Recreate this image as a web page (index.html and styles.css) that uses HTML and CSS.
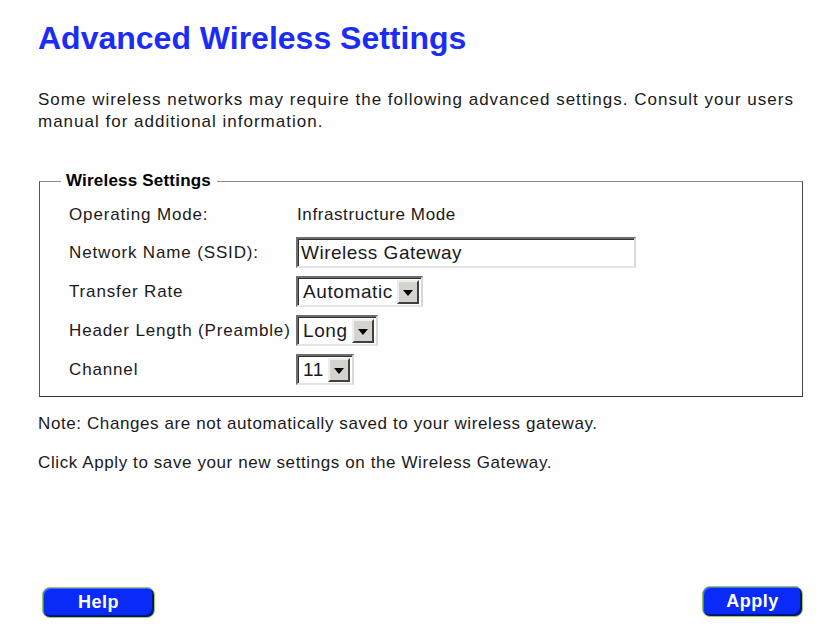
FILE: index.html
```html
<!DOCTYPE html>
<html lang="en">
<head>
  <meta charset="UTF-8" />
  <title>Advanced Wireless Settings</title>
  <link rel="stylesheet" href="styles.css">
</head>
<body>

<div class="page">
  <h1 class="title">Advanced Wireless Settings</h1>

  <p class="intro">Some wireless networks may require the following advanced settings. Consult your users manual for additional information.</p>

  <!-- Settings group -->
  <fieldset class="group">
    <legend>Wireless Settings</legend>

    <div class="row row-first">
      <span class="label">Operating Mode:</span>
      <span class="value">Infrastructure Mode</span>
    </div>

    <div class="row">
      <span class="label">Network Name (SSID):</span>
      <span class="textbox">Wireless Gateway</span>
    </div>

    <div class="row">
      <span class="label">Transfer Rate</span>
      <span class="select"><span class="select-text">Automatic</span><span class="select-arrow"></span></span>
    </div>

    <div class="row">
      <span class="label">Header Length (Preamble)</span>
      <span class="select"><span class="select-text">Long</span><span class="select-arrow"></span></span>
    </div>

    <div class="row">
      <span class="label">Channel</span>
      <span class="select"><span class="select-text">11</span><span class="select-arrow"></span></span>
    </div>
  </fieldset>

  <p class="note">Note: Changes are not automatically saved to your wireless gateway.</p>
  <p class="note">Click Apply to save your new settings on the Wireless Gateway.</p>

  <div class="actions">
    <button class="btn btn-help">Help</button>
    <button class="btn btn-apply">Apply</button>
  </div>
</div>

</body>
</html>
```

FILE: styles.css
```css
:root {
  --text: #1a1a1a;
  --blue: #1a2cf5;
  --btn-blue: #0a2af8;
}

* {
  box-sizing: border-box;
}

body {
  margin: 0;
  background: #fefefe;
  color: var(--text);
  font-family: "Liberation Sans", Arial, sans-serif;
  font-size: 17px;
  letter-spacing: 0.6px;
}

.page {
  height: 633px;
  padding: 20px 30px 14px 38px;
  display: flex;
  flex-direction: column;
}

.title {
  margin: 0;
  color: var(--blue);
  font-size: 32px;
  font-weight: bold;
  letter-spacing: 0;
  line-height: 36px;
}

.intro {
  margin: 33px 0 0;
  line-height: 22px;
  letter-spacing: 1px;
}

.group {
  margin: 38px 0 0 1px;
  padding: 6px 0 7px 29px;
  width: 764px;
  border: 1px solid;
  border-color: #8a8a8a #444 #333 #555;
}

.group legend {
  margin-left: -8px;
  padding: 0 6px 0 5px;
  font-weight: bold;
  letter-spacing: 0.2px;
  color: #000;
}

.row {
  display: flex;
  align-items: center;
  height: 39px;
}

.row-first {
  height: 36px;
}

.label {
  width: 227px;
  flex-shrink: 0;
  letter-spacing: 0.85px;
}

.value {
  padding-left: 1px;
}

.textbox,
.select {
  display: inline-flex;
  align-items: center;
  height: 31px;
  background: #fff;
  font-size: 19px;
  border: 2px solid;
  border-color: #6e6e6e #d8d8d8 #e4e4e4 #6e6e6e;
  box-shadow: inset 1px 1px 0 #303030;
}

.textbox {
  width: 340px;
  padding-left: 3px;
  letter-spacing: 0.5px;
}

.select {
  padding-left: 5px;
  padding-right: 2px;
  letter-spacing: 0.6px;
}

.select-text {
  margin-right: 4px;
}

.select-arrow {
  width: 22px;
  height: 24px;
  background: #d6d3ce;
  border: 2px solid;
  border-color: #eee #404040 #404040 #eee;
  display: flex;
  align-items: center;
  justify-content: center;
}

.select-arrow::after {
  content: "";
  border-left: 5px solid transparent;
  border-right: 5px solid transparent;
  border-top: 6px solid #000;
  margin-top: 2px;
}

.note {
  margin: 15px 0 0;
  line-height: 24px;
}

.note + .note {
  margin-top: 15px;
}

.actions {
  margin-top: auto;
  display: flex;
  justify-content: space-between;
  align-items: center;
  padding-left: 4px;
}

.btn {
  height: 31px;
  border: 1px solid #9acd5a;
  border-radius: 8px;
  background: var(--btn-blue);
  color: #fff;
  font-family: "Liberation Sans", Arial, sans-serif;
  font-size: 18px;
  font-weight: bold;
  letter-spacing: 0.5px;
  box-shadow: inset -2px -2px 0 #00137a, inset 1px 1px 0 #4a6aff;
  cursor: pointer;
}

.btn-help {
  width: 113px;
}

.btn-apply {
  width: 101px;
  margin-bottom: 2px;
}
```
